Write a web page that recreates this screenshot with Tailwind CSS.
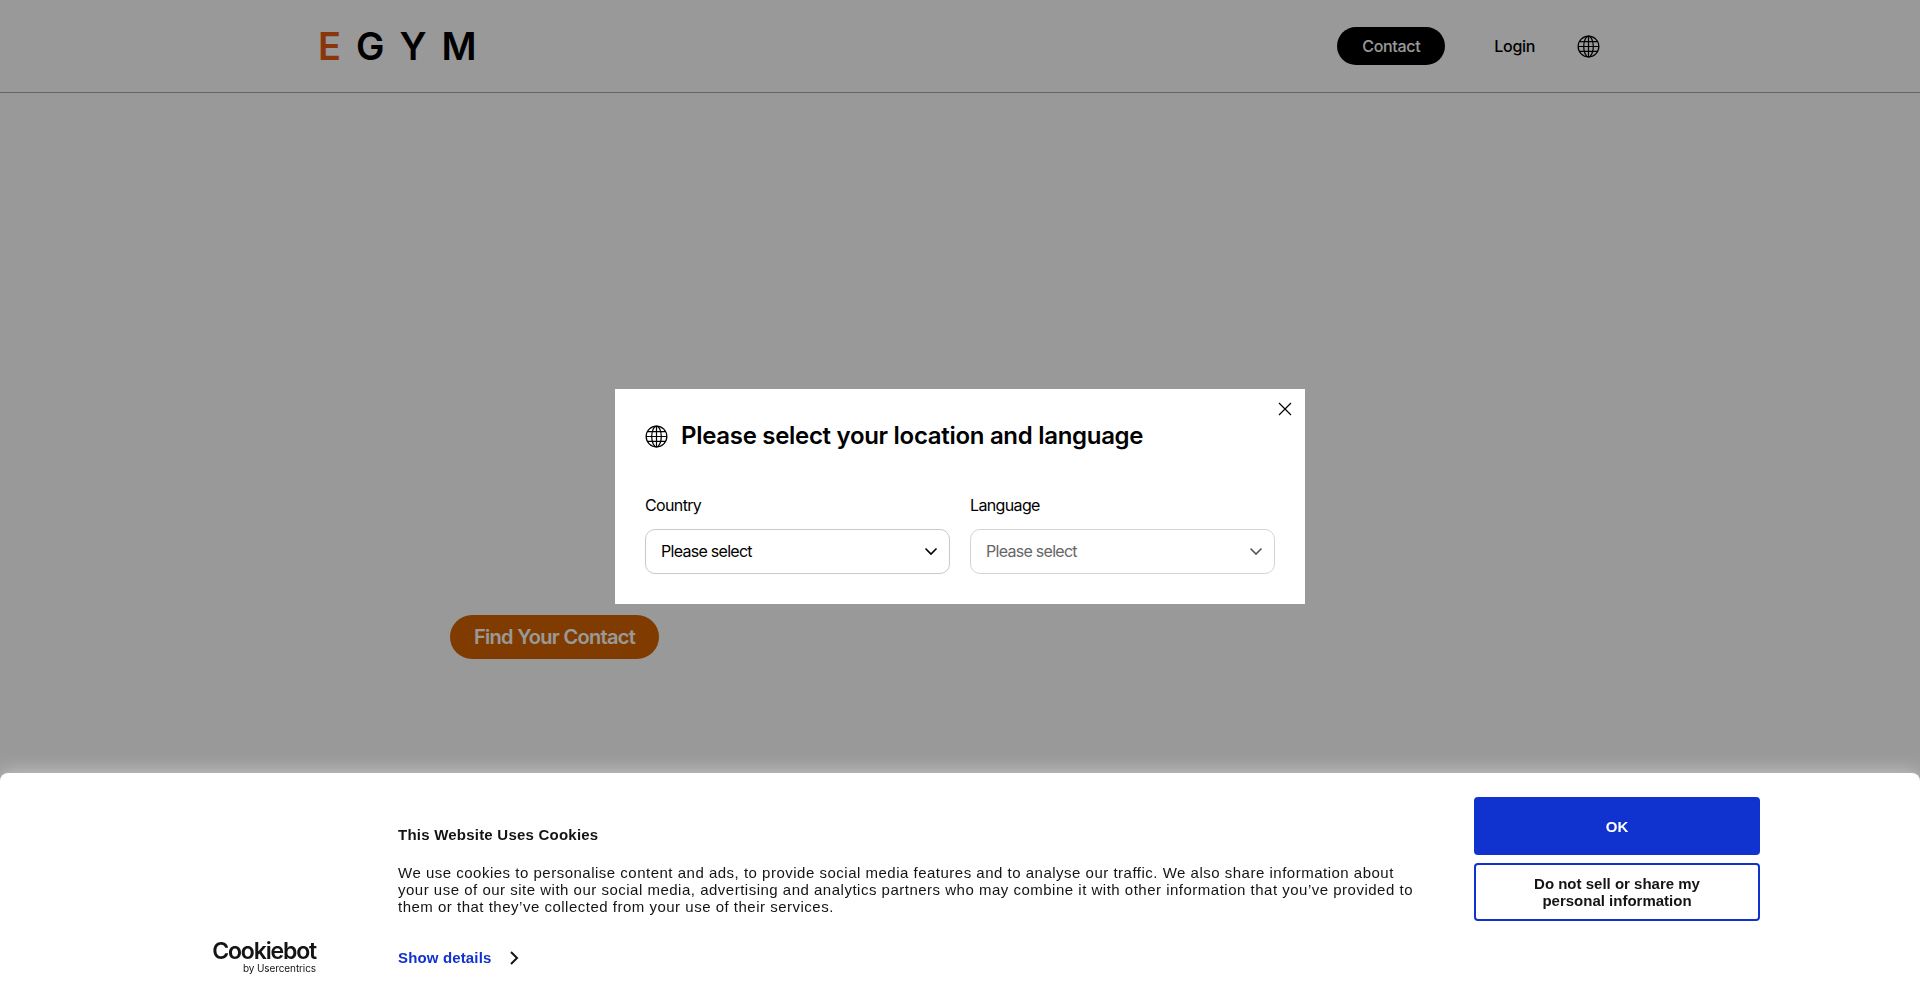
<!DOCTYPE html>
<html lang="en">

<head>
    <meta charset="UTF-8">
    <meta name="viewport" content="width=device-width, initial-scale=1.0">
    <title>EGYM</title>
    <script src="https://cdn.jsdelivr.net/npm/@tailwindcss/browser@4"></script>
</head>

<body class="h-[993px] overflow-hidden bg-white font-['Inter',sans-serif]">

    <!-- page under the overlay -->
    <header class="h-[93px] border-b border-[#a8a8a8] pl-[318px] pr-[320px] flex items-center">
        <div class="flex gap-[15px] font-['Inter',sans-serif] font-semibold text-[38px] leading-none text-black">
            <span class="text-[#e65a14]">E</span><span>G</span><span>Y</span><span>M</span>
        </div>
        <nav class="ml-auto flex items-center">
            <a class="h-[38px] w-[108px] rounded-full bg-black text-white text-[16px] font-medium tracking-[-0.02em] flex items-center justify-center">Contact</a>
            <a class="ml-[49px] text-[16px] font-medium tracking-[-0.02em] text-black">Login</a>
            <svg class="ml-[42px] w-[23px] h-[23px]" viewBox="0 0 24 24" fill="none" stroke="black" stroke-width="1.3">
                <circle cx="12" cy="12" r="10.8" />
                <ellipse cx="12" cy="12" rx="5" ry="10.8" />
                <path d="M12 1.2v21.6M2.4 7h19.2M1.2 12h21.6M2.4 17h19.2" />
            </svg>
        </nav>
    </header>

    <main class="pl-[450px] pt-[522px]">
        <a class="h-[44px] w-[209px] rounded-full bg-[#d56400] text-white text-[20px] font-semibold tracking-[-0.035em] flex items-center justify-center">Find Your Contact</a>
    </main>

    <!-- overlay + modal -->
    <div class="fixed inset-0 bg-black/40 flex items-center justify-center">
        <div class="relative w-[690px] h-[215px] bg-white px-[30px]">
            <button class="absolute top-[12px] right-[12px] w-[16px] h-[16px]">
                <svg viewBox="0 0 16 16" fill="none" stroke="black" stroke-width="1.2">
                    <path d="M2 2l12 12M14 2L2 14" />
                </svg>
            </button>
            <div class="flex items-center pt-[32px]">
                <svg class="w-[23px] h-[23px]" viewBox="0 0 24 24" fill="none" stroke="black" stroke-width="1.3">
                    <circle cx="12" cy="12" r="10.8" />
                    <ellipse cx="12" cy="12" rx="5" ry="10.8" />
                    <path d="M12 1.2v21.6M2.4 7h19.2M1.2 12h21.6M2.4 17h19.2" />
                </svg>
                <h2 class="ml-[13px] text-[24px] leading-[30px] font-semibold tracking-[-0.0125em] text-black">Please select your location and language</h2>
            </div>
            <div class="mt-[42px] grid grid-cols-2 gap-x-[20px]">
                <div>
                    <label class="block text-[16px] leading-[24px] tracking-[-0.04em] text-black">Country</label>
                    <div class="mt-[12px] h-[45px] rounded-[10px] border border-[#c9c9c9] pl-[15px] pr-[11px] pb-[1px] flex items-center justify-between">
                        <span class="text-[16px] tracking-[-0.045em] text-black">Please select</span>
                        <svg class="w-[14px] h-[14px]" viewBox="0 0 14 14" fill="none" stroke="black" stroke-width="1.6">
                            <path d="M1.5 4.5L7 10l5.5-5.5" />
                        </svg>
                    </div>
                </div>
                <div>
                    <label class="block text-[16px] leading-[24px] tracking-[-0.04em] text-black">Language</label>
                    <div class="mt-[12px] h-[45px] rounded-[10px] border border-[#d4d4d4] pl-[15px] pr-[11px] pb-[1px] flex items-center justify-between">
                        <span class="text-[16px] tracking-[-0.045em] text-[#666]">Please select</span>
                        <svg class="w-[14px] h-[14px]" viewBox="0 0 14 14" fill="none" stroke="#555" stroke-width="1.6">
                            <path d="M1.5 4.5L7 10l5.5-5.5" />
                        </svg>
                    </div>
                </div>
            </div>
        </div>
    </div>

    <!-- cookie banner -->
    <div class="fixed left-0 right-0 bottom-0 h-[220px] bg-white rounded-t-[8px] shadow-[0_0_20px_rgba(255,255,255,0.5)] flex font-['Liberation_Sans',sans-serif] text-[#141414]">
        <div class="w-[398px] flex justify-end items-end pr-[82px] pb-[20px]">
            <div class="flex flex-col items-end">
                <span class="font-['Inter',sans-serif] font-semibold text-[23px] leading-[24px] tracking-[-0.05em] text-[#141414]">Cookiebot</span>
                <span class="font-['Inter',sans-serif] text-[10px] leading-[10px] tracking-[-0.01em] text-[#141414]">by Usercentrics</span>
            </div>
        </div>
        <div class="w-[1030px] pt-[52px]">
            <h3 class="text-[15px] leading-[20px] font-bold tracking-[0.015em]">This Website Uses Cookies</h3>
            <p class="mt-[19px] max-w-[1022px] text-[15px] leading-[17px] tracking-[0.5px]">We use cookies to personalise content and ads, to provide social media features and to analyse our traffic. We also share information about your use of our site with our social media, advertising and analytics partners who may combine it with other information that you’ve provided to them or that they’ve collected from your use of their services.</p>
            <div class="mt-[33px] flex items-center">
                <a class="text-[15px] leading-[20px] font-bold tracking-[0.01em] text-[#1032cf]">Show details</a>
                <svg class="ml-[17px] w-[10px] h-[14px]" viewBox="0 0 10 14" fill="none" stroke="#141414" stroke-width="2">
                    <path d="M2 1l6 6-6 6" />
                </svg>
            </div>
        </div>
        <div class="ml-[46px] w-[286px] pt-[24px] flex flex-col gap-[8px]">
            <button class="h-[58px] rounded-[4px] bg-[#1032cf] text-white text-[15px] leading-[17px] font-bold">OK</button>
            <button class="h-[58px] rounded-[4px] border-2 border-[#1032cf] text-[15px] leading-[17px] font-bold px-[40px]">Do not sell or share my personal information</button>
        </div>
    </div>

</body>

</html>
